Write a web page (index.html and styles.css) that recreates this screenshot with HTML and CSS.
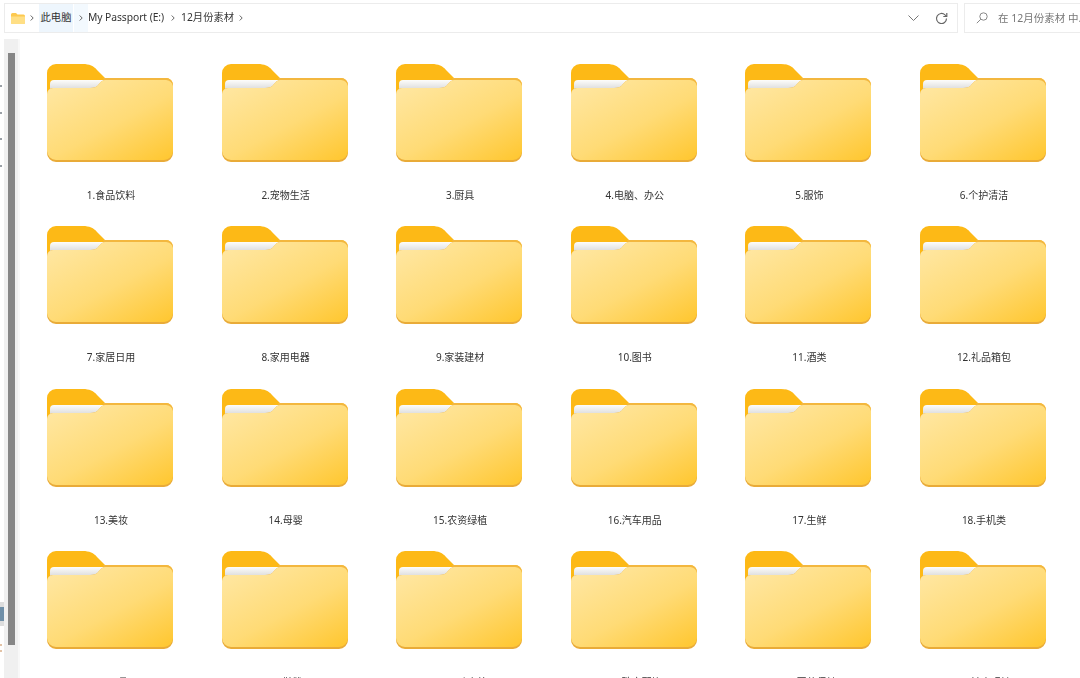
FILE: index.html
```html
<!DOCTYPE html>
<html lang="zh-CN">
<head>
  <meta charset="UTF-8">
  <title>12月份素材</title>
  <link rel="stylesheet" href="styles.css">
</head>
<body>

  <!-- Dégradés et dossier réutilisable -->
  <svg class="defs" width="0" height="0">
    <defs>
      <linearGradient id="front-fill" x1="0.08" y1="0" x2="0.92" y2="1">
        <stop offset="0" stop-color="#ffe7a3"/>
        <stop offset="0.55" stop-color="#ffdb76"/>
        <stop offset="1" stop-color="#ffc834"/>
      </linearGradient>
      <linearGradient id="paper-fill" x1="0" y1="0" x2="0" y2="1">
        <stop offset="0" stop-color="#fdfdfb"/>
        <stop offset="1" stop-color="#d9d9d9"/>
      </linearGradient>
      <symbol id="folder" viewBox="0 0 126 98">
        <path d="M0 9a9 9 0 0 1 9-9h27c6 0 11 2 14 6l8 8h61a7 7 0 0 1 7 7v20H0z" fill="#fdb916"/>
        <path d="M56 14h63a7 7 0 0 1 7 7v6H60z" fill="#f3b73f"/>
        <path d="M3 26v-6a4 4 0 0 1 4-4h51v10z" fill="url(#paper-fill)"/>
        <path d="M0 89V30a6 6 0 0 1 6-6h37c4 0 7-1 9-4l2-2c1-1 2-2 4-2h61a7 7 0 0 1 7 6v67a9 9 0 0 1-9 9H9a9 9 0 0 1-9-9z" fill="#e9ab38"/>
        <path d="M0 87V30a6 6 0 0 1 6-6h37c4 0 7-1 9-4l2-2c1-1 2-2 4-2h61a7 7 0 0 1 7 6v65a9 9 0 0 1-9 9H9a9 9 0 0 1-9-9z" fill="url(#front-fill)"/>
      </symbol>
      <symbol id="sep" viewBox="0 0 4 6">
        <path d="M.7.500L3.200 3 .7 5.500" fill="none" stroke="#666" stroke-width="1"/>
      </symbol>
    </defs>
  </svg>

  <!-- Barre d'adresse -->
  <div class="topbar">
    <div class="address">
      <svg class="address-icon" width="14" height="11" viewBox="0 0 14 11">
        <path d="M0 1.5A1.5 1.5 0 0 1 1.5 0h3.5l1.5 1.5h6A1.5 1.5 0 0 1 14 3v6.500A1.500 1.500 0 0 1 12.500 11h-11A1.500 1.500 0 0 1 0 9.500z" fill="#fdc94f"/>
        <path d="M0 3.500h14v6A1.500 1.500 0 0 1 12.500 11h-11A1.500 1.500 0 0 1 0 9.500z" fill="#ffdf85"/>
      </svg>
      <span class="sep"><svg width="4" height="6"><use href="#sep"/></svg></span>
      <span class="crumb crumb-hover">此电脑</span>
      <span class="sep sep-hover"><svg width="4" height="6"><use href="#sep"/></svg></span>
      <span class="crumb crumb-drive">My Passport (E:)</span>
      <span class="sep sep-wide"><svg width="4" height="6"><use href="#sep"/></svg></span>
      <span class="crumb">12月份素材</span>
      <span class="sep"><svg width="4" height="6"><use href="#sep"/></svg></span>
      <svg class="chevron" width="11" height="6" viewBox="0 0 11 6">
        <path d="M.5.500l5 5 5-5" fill="none" stroke="#777" stroke-width="1"/>
      </svg>
      <svg class="refresh" width="13" height="13" viewBox="0 0 13 13">
        <path d="M11.500 6.500a5 5 0 1 1-1.500-3.600l1.500 1.300" fill="none" stroke="#666" stroke-width="1.200"/>
        <path d="M11.800 1v3.500H8.300" fill="none" stroke="#666" stroke-width="1.200"/>
      </svg>
    </div>
    <div class="search">
      <svg width="12" height="12" viewBox="0 0 12 12">
        <circle cx="7.500" cy="4.500" r="3.700" fill="none" stroke="#888" stroke-width="1"/>
        <path d="M4.800 7.200L.8 11.200" stroke="#888" stroke-width="1"/>
      </svg>
      <span class="search-text">在 12月份素材 中...</span>
    </div>
  </div>

  <div class="content">
    <!-- Bord de la fenêtre derrière -->
    <div class="edge">
      <i class="dot"></i><i class="dot"></i><i class="dot"></i><i class="dot"></i>
      <b class="edge-thumb"></b>
      <i class="dot dot-orange"></i><i class="dot dot-orange"></i>
    </div>
    <div class="scrollbar"><div class="thumb"></div></div>

    <!-- Grille des dossiers -->
    <div class="files">
      <div class="item"><svg class="folder"><use href="#folder"/></svg><span class="name">1.食品饮料</span></div>
      <div class="item"><svg class="folder"><use href="#folder"/></svg><span class="name">2.宠物生活</span></div>
      <div class="item"><svg class="folder"><use href="#folder"/></svg><span class="name">3.厨具</span></div>
      <div class="item"><svg class="folder"><use href="#folder"/></svg><span class="name">4.电脑、办公</span></div>
      <div class="item"><svg class="folder"><use href="#folder"/></svg><span class="name">5.服饰</span></div>
      <div class="item"><svg class="folder"><use href="#folder"/></svg><span class="name">6.个护清洁</span></div>
      <div class="item"><svg class="folder"><use href="#folder"/></svg><span class="name">7.家居日用</span></div>
      <div class="item"><svg class="folder"><use href="#folder"/></svg><span class="name">8.家用电器</span></div>
      <div class="item"><svg class="folder"><use href="#folder"/></svg><span class="name">9.家装建材</span></div>
      <div class="item"><svg class="folder"><use href="#folder"/></svg><span class="name">10.图书</span></div>
      <div class="item"><svg class="folder"><use href="#folder"/></svg><span class="name">11.酒类</span></div>
      <div class="item"><svg class="folder"><use href="#folder"/></svg><span class="name">12.礼品箱包</span></div>
      <div class="item"><svg class="folder"><use href="#folder"/></svg><span class="name">13.美妆</span></div>
      <div class="item"><svg class="folder"><use href="#folder"/></svg><span class="name">14.母婴</span></div>
      <div class="item"><svg class="folder"><use href="#folder"/></svg><span class="name">15.农资绿植</span></div>
      <div class="item"><svg class="folder"><use href="#folder"/></svg><span class="name">16.汽车用品</span></div>
      <div class="item"><svg class="folder"><use href="#folder"/></svg><span class="name">17.生鲜</span></div>
      <div class="item"><svg class="folder"><use href="#folder"/></svg><span class="name">18.手机类</span></div>
      <div class="item"><svg class="folder"><use href="#folder"/></svg><span class="name">19.玩具</span></div>
      <div class="item"><svg class="folder"><use href="#folder"/></svg><span class="name">20.鞋靴</span></div>
      <div class="item"><svg class="folder"><use href="#folder"/></svg><span class="name">21.运动户外</span></div>
      <div class="item"><svg class="folder"><use href="#folder"/></svg><span class="name">22.珠宝配饰</span></div>
      <div class="item"><svg class="folder"><use href="#folder"/></svg><span class="name">23.医药保健</span></div>
      <div class="item"><svg class="folder"><use href="#folder"/></svg><span class="name">24.钟表眼镜</span></div>
    </div>
  </div>

</body>
</html>
```

FILE: styles.css
```css
/* Page */
html, body {
  margin: 0;
  height: 678px;
  overflow: hidden;
  background: #fff;
  font-family: "Noto Sans", "Noto Sans CJK SC", sans-serif;
  color: #333;
}

.defs {
  display: block;
  height: 0;
}

/* Barre d'adresse */
.topbar {
  display: flex;
  gap: 6px;
  height: 30px;
  padding: 3px 0 0 4px;
  overflow: hidden;
  filter: blur(0.3px);
}

.address {
  display: flex;
  align-items: center;
  width: 954px;
  flex: none;
  box-sizing: border-box;
  padding-left: 6px;
  border: 1px solid #ececec;
  font-size: 10.300px;
}

.address-icon {
  flex: none;
}

.sep {
  display: flex;
  align-items: center;
  justify-content: center;
  width: 14px;
  height: 28px;
  margin-top: -1px;
}

.sep-wide {
  width: 17px;
}

.crumb {
  white-space: nowrap;
  line-height: 26px;
  height: 28px;
}

.crumb-hover {
  width: 34px;
  text-align: center;
  background: #eef6fd;
}

.crumb-drive {
  letter-spacing: -0.060px;
}

.sep-hover {
  margin-top: 0;
  background: #f3f9fe;
  margin-left: 1px;
}

.chevron {
  margin-left: auto;
}

.refresh {
  margin: 0 9px 0 16px;
}

.search {
  display: flex;
  align-items: center;
  gap: 10px;
  width: 140px;
  flex: none;
  box-sizing: border-box;
  padding-left: 11px;
  border: 1px solid #ececec;
  color: #777;
  font-size: 10.500px;
  white-space: nowrap;
}

.search-text {
  margin-top: -1px;
}

/* Contenu */
.content {
  display: flex;
  height: 645px;
}

.edge {
  width: 4px;
  flex: none;
  display: flex;
  flex-direction: column;
  align-items: flex-start;
  padding-top: 52px;
  overflow: hidden;
}

.dot {
  width: 2px;
  height: 2px;
  margin-bottom: 24.500px;
  background: #9aa0a6;
}

.edge-thumb {
  width: 4px;
  height: 24px;
  margin: 411px 0 18px;
  background: linear-gradient(#ddd 0 5px, #6f8fa8 5px 19px, #ddd 19px);
}

.dot-orange {
  margin-bottom: 4px;
  background: #e3c3a6;
}

.scrollbar {
  width: 14px;
  flex: none;
  margin-top: 6px;
  background: #f0f0f0;
  border-right: 2px solid #f8f8f8;
}

.thumb {
  width: 7px;
  height: 592px;
  margin: 14px 0 0 4px;
  background: #868686;
}

/* Grille */
.files {
  display: grid;
  grid-template-columns: repeat(6, 174.600px);
  grid-auto-rows: 162.300px;
  margin-left: 2.700px;
  padding-top: 31px;
  filter: blur(0.3px);
}

.item {
  display: flex;
  flex-direction: column;
  align-items: center;
}

.folder {
  width: 126px;
  height: 98px;
  flex: none;
}

.name {
  margin-top: 25px;
  padding-left: 2px;
  font-size: 10px;
  line-height: 16px;
  color: #333;
}
```
